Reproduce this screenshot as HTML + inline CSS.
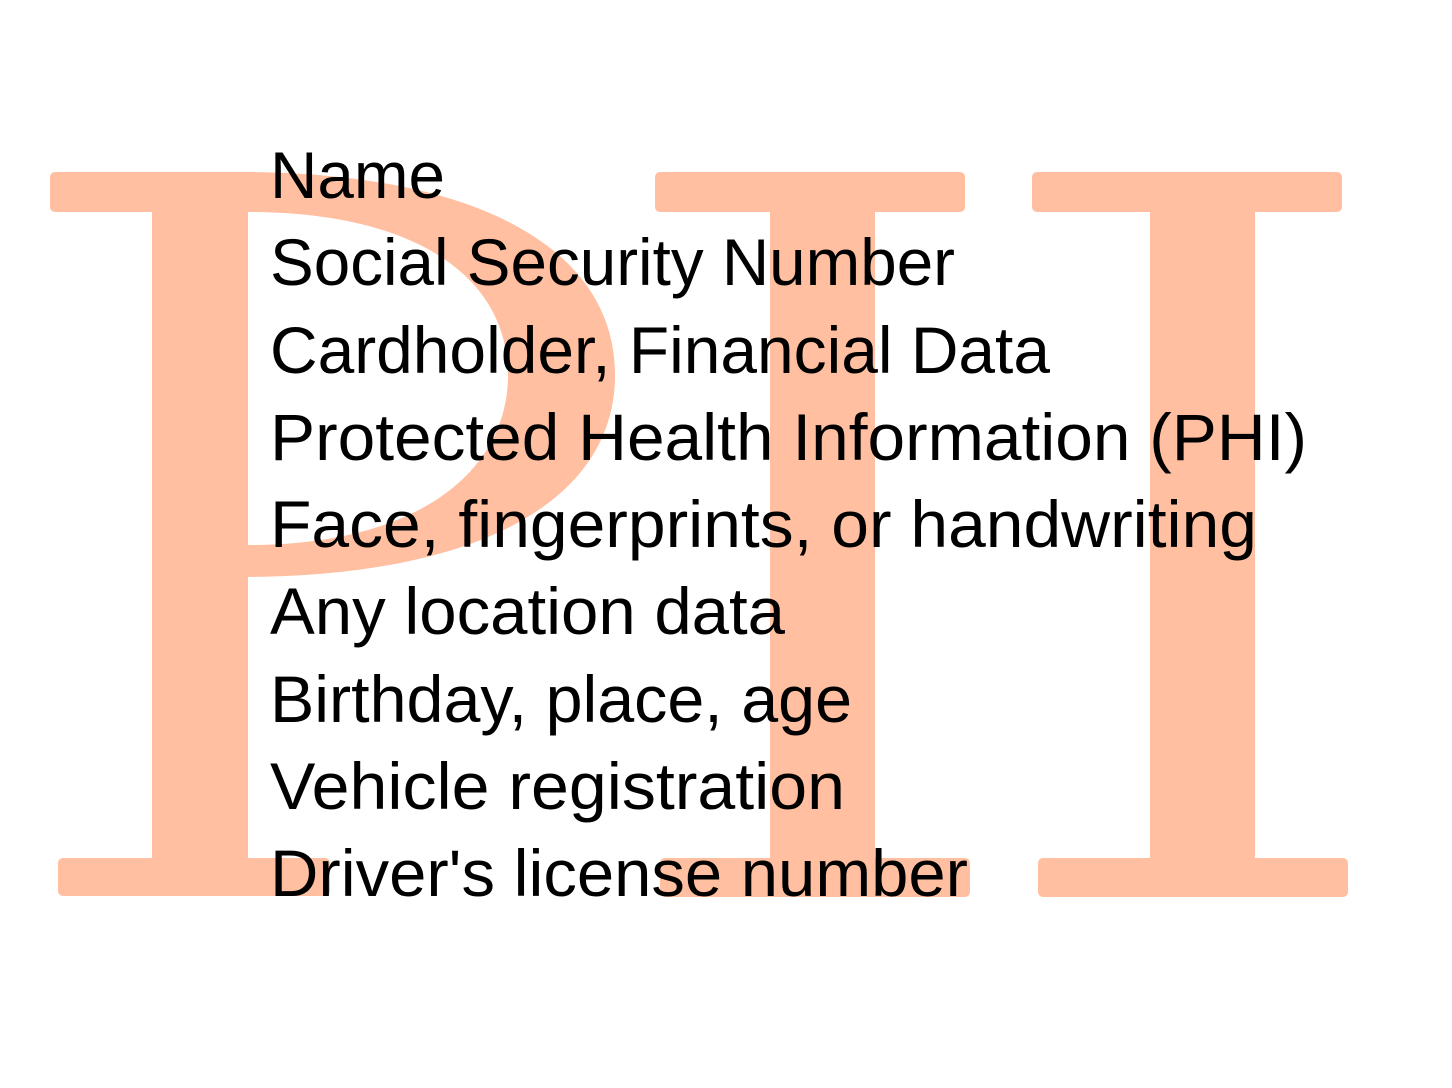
<!DOCTYPE html>
<html><head><style>html,body{margin:0;padding:0;background:#fff}svg{display:block}</style></head>
<body>
<svg width="1452" height="1088" viewBox="0 0 1452 1088" xmlns="http://www.w3.org/2000/svg">
<g fill="#FFBFA0">
<!-- P -->
<rect x="50" y="172" width="210" height="40" rx="5"/>
<rect x="152" y="200" width="96" height="670"/>
<path d="M152,212 C152,190 140,212 130,212 Z"/>
<rect x="58" y="858" width="272" height="38" rx="5"/>
<path fill-rule="evenodd" d="M240,172 C480,172 615,250 615,375 C615,500 480,577 240,577 Z M248,212 C420,212 508,280 508,375 C508,470 420,545 248,545 Z"/>
<!-- I -->
<rect x="655" y="172" width="310" height="40" rx="5"/>
<rect x="770" y="200" width="105" height="670"/>
<rect x="660" y="858" width="310" height="39" rx="5"/>
<!-- I -->
<rect x="1032" y="172" width="310" height="40" rx="5"/>
<rect x="1150" y="200" width="105" height="670"/>
<rect x="1038" y="858" width="310" height="39" rx="5"/>
</g>
<g font-family="'Liberation Sans', sans-serif" font-size="66" fill="#000" lengthAdjust="spacingAndGlyphs">
<text x="270" y="198" textLength="175" lengthAdjust="spacingAndGlyphs">Name</text>
<text x="270" y="285" textLength="685" lengthAdjust="spacingAndGlyphs">Social Security Number</text>
<text x="270" y="373" textLength="780" lengthAdjust="spacingAndGlyphs">Cardholder, Financial Data</text>
<text x="270" y="460" textLength="1037" lengthAdjust="spacingAndGlyphs">Protected Health Information (PHI)</text>
<text x="270" y="547" textLength="987" lengthAdjust="spacingAndGlyphs">Face, fingerprints, or handwriting</text>
<text x="270" y="634" textLength="515" lengthAdjust="spacingAndGlyphs">Any location data</text>
<text x="270" y="722" textLength="582" lengthAdjust="spacingAndGlyphs">Birthday, place, age</text>
<text x="270" y="809" textLength="575" lengthAdjust="spacingAndGlyphs">Vehicle registration</text>
<text x="270" y="896" textLength="698" lengthAdjust="spacingAndGlyphs">Driver's license number</text>
</g>
</svg>
</body></html>
